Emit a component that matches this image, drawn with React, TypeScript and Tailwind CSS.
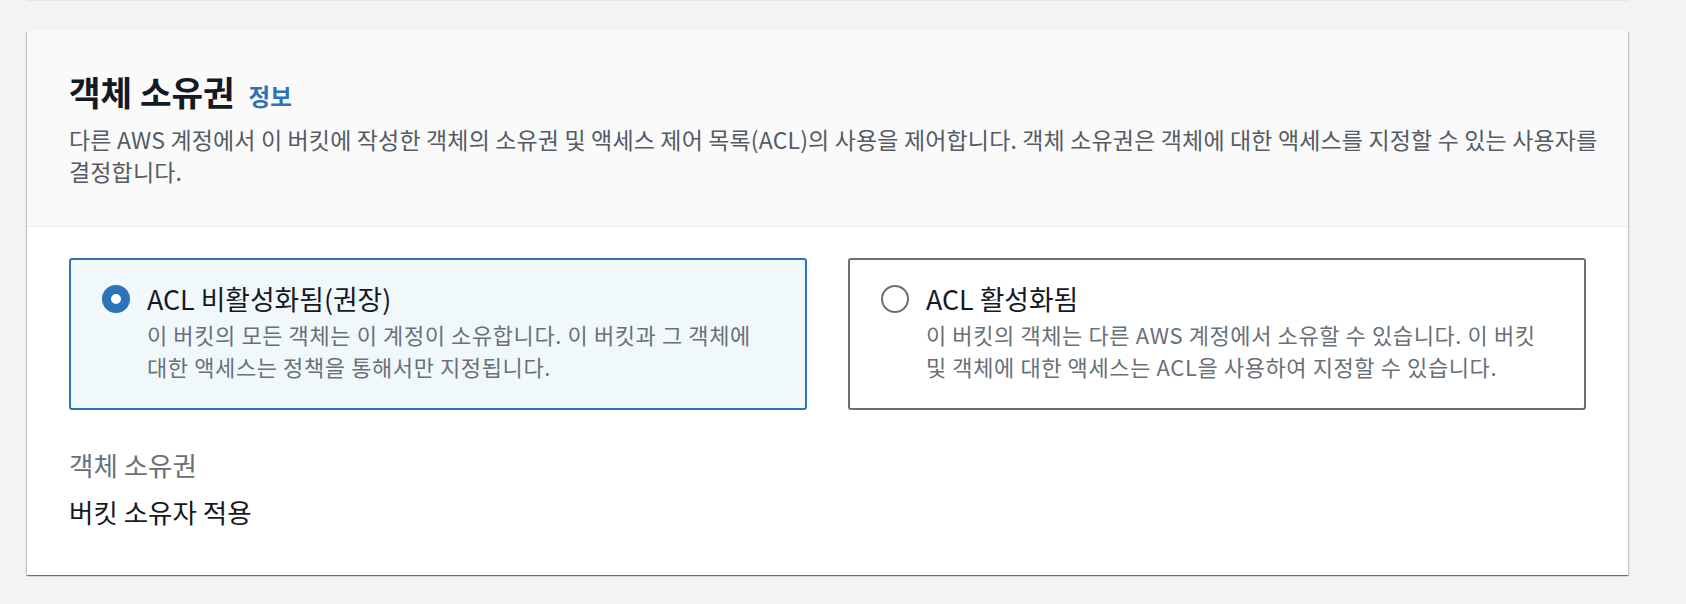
import React from "react";

function Radio({ checked }: { checked: boolean }) {
  return checked ? (
    <span className="mt-[5px] block h-[28px] w-[28px] shrink-0 rounded-full border-[9px] border-[#2e72b8] bg-white" />
  ) : (
    <span className="mt-[5px] block h-[28px] w-[28px] shrink-0 rounded-full border-2 border-[#687078] bg-white" />
  );
}

function Tile({
  checked,
  label,
  line1,
  line2,
}: {
  checked: boolean;
  label: string;
  line1: string;
  line2: string;
}) {
  return (
    <div
      className={
        checked
          ? "flex gap-[17px] rounded-[3px] border-2 border-[#2e72b8] bg-[#f1f8fc] pb-[26px] pl-[31px] pr-[12px] pt-[20px]"
          : "flex gap-[17px] rounded-[3px] border-2 border-[#687078] bg-white pb-[26px] pl-[31px] pr-[12px] pt-[20px]"
      }
    >
      <Radio checked={checked} />
      <div className="min-w-0">
        <div className="text-[26.8px] leading-[38px] text-[#16191f]">{label}</div>
        <div className="text-[22px] leading-[32px] tracking-[0.6px] text-[#687078]">
          {line1}
          <br />
          {line2}
        </div>
      </div>
    </div>
  );
}

export default function App() {
  return (
    <div className="min-h-[604px] w-[1686px] bg-[#f2f3f3] font-['Noto_Sans_CJK_KR','Noto_Sans',sans-serif]">
      <div className="ml-[27px] h-px w-[1601px] bg-[#e4e7e8]" />
      <div className="ml-[27px] mt-[30px] w-[1601px] bg-white shadow-[0_1px_1px_0_rgba(0,28,36,0.45),1px_1px_1px_0_rgba(0,28,36,0.15),-1px_1px_1px_0_rgba(0,28,36,0.15)]">
        <div className="border-b border-[#eaeded] bg-[#fafafa] px-[42px] pb-[39px] pt-[40px]">
          <h2 className="flex items-baseline leading-[40px]">
            <span className="text-[34.3px] font-bold text-[#16191f]">객체 소유권</span>
            <span className="ml-[14px] text-[23.5px] font-bold text-[#2e72b8]">정보</span>
          </h2>
          <p className="mt-[8px] whitespace-nowrap text-[23px] leading-[31.5px] tracking-[0.15px] text-[#545b64]">
            다른 AWS 계정에서 이 버킷에 작성한 객체의 소유권 및 액세스 제어 목록(ACL)의 사용을 제어합니다. 객체 소유권은 객체에 대한 액세스를 지정할 수 있는 사용자를
            <br />
            결정합니다.
          </p>
        </div>
        <div className="px-[42px] pb-[46px] pt-[31px]">
          <div className="grid grid-cols-2 gap-[41px]">
            <Tile
              checked
              label="ACL 비활성화됨(권장)"
              line1="이 버킷의 모든 객체는 이 계정이 소유합니다. 이 버킷과 그 객체에"
              line2="대한 액세스는 정책을 통해서만 지정됩니다."
            />
            <Tile
              checked={false}
              label="ACL 활성화됨"
              line1="이 버킷의 객체는 다른 AWS 계정에서 소유할 수 있습니다. 이 버킷"
              line2="및 객체에 대한 액세스는 ACL을 사용하여 지정할 수 있습니다."
            />
          </div>
          <div className="mt-[38px] text-[26.5px] leading-[34px] text-[#687078]">객체 소유권</div>
          <div className="mt-[13px] text-[26.5px] leading-[34px] text-[#16191f]">버킷 소유자 적용</div>
        </div>
      </div>
    </div>
  );
}
